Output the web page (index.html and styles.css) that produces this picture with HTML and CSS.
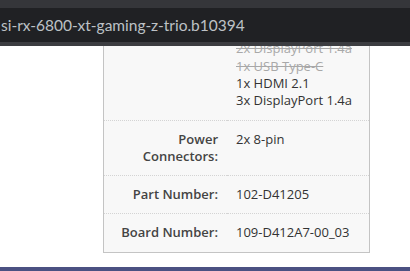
FILE: index.html
```html
<!DOCTYPE html>
<html>
<head>
<meta charset="utf-8">
<link rel="stylesheet" href="styles.css">
</head>
<body>
<header class="urlbar">
  <div class="urlbar-field"><span class="url">si-rx-6800-xt-gaming-z-trio.b10394</span></div>
</header>
<main class="content">
  <table class="specs">
    <tr>
      <th></th>
      <td>
        <div class="old">2x DisplayPort 1.4a</div>
        <div class="old">1x USB Type-C</div>
        <div>1x HDMI 2.1</div>
        <div>3x DisplayPort 1.4a</div>
      </td>
    </tr>
    <tr>
      <th>Power<br>Connectors:</th>
      <td>2x 8-pin</td>
    </tr>
    <tr>
      <th>Part Number:</th>
      <td>102-D41205</td>
    </tr>
    <tr>
      <th>Board Number:</th>
      <td>109-D412A7-00_03</td>
    </tr>
  </table>
</main>
<footer class="footer-bar"></footer>
</body>
</html>
```
FILE: styles.css
```css
html, body {
  margin: 0;
  padding: 0;
  height: 100%;
  overflow: hidden;
  background: #ffffff;
}
body {
  display: flex;
  flex-direction: column;
  font-family: "Open Sans", "Noto Sans", sans-serif;
}
.urlbar {
  flex: 0 0 auto;
  background: #35363a;
  padding-top: 8px;
  border-bottom: 4px solid #3c3d41;
}
.urlbar-field {
  background: #202124;
  height: 34px;
  display: flex;
  align-items: center;
}
.url {
  color: #bdc1c6;
  font-family: Lato, "Open Sans", sans-serif;
  font-size: 15.5px;
  white-space: nowrap;
  padding-left: 1px;
}
.content {
  flex: 1 1 auto;
  overflow: hidden;
  padding-left: 103px;
}
.specs {
  width: 267px;
  margin-top: -16.7px;
  border-collapse: collapse;
  background: #f8f8f8;
  border: 1px solid #c4c4c4;
  font-size: 13px;
  line-height: 17.3px;
}
.specs tr + tr th,
.specs tr + tr td {
  border-top: 1px dotted #d4d4d4;
}
.specs th {
  width: 114px;
  text-align: right;
  vertical-align: top;
  font-weight: 600;
  color: #444;
  padding: 10px 9px 10px 0;
}
.specs td {
  vertical-align: top;
  color: #333;
  padding: 10px 0 10px 9px;
}
.old {
  color: #a8a8a8;
  text-decoration: line-through;
}
.footer-bar {
  flex: 0 0 4px;
  background: #4b5182;
}
```
